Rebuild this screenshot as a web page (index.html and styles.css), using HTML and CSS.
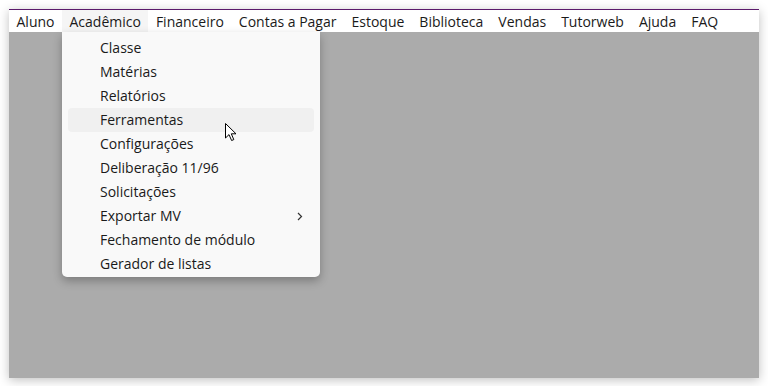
FILE: index.html
```html
<!DOCTYPE html>
<html>
<head>
  <meta charset="utf-8">
  <link rel="stylesheet" href="styles.css">
</head>
<body>
<div class="window">
  <div class="menubar">
    <span class="menu-item">Aluno</span>
    <span class="menu-item open">Acadêmico</span>
    <span class="menu-item">Financeiro</span>
    <span class="menu-item">Contas a Pagar</span>
    <span class="menu-item">Estoque</span>
    <span class="menu-item">Biblioteca</span>
    <span class="menu-item">Vendas</span>
    <span class="menu-item">Tutorweb</span>
    <span class="menu-item">Ajuda</span>
    <span class="menu-item">FAQ</span>
  </div>
  <div class="workspace">
    <div class="dropdown">
      <div class="drop-item">Classe</div>
      <div class="drop-item">Matérias</div>
      <div class="drop-item">Relatórios</div>
      <div class="drop-item hover">Ferramentas</div>
      <div class="drop-item">Configurações</div>
      <div class="drop-item">Deliberação 11/96</div>
      <div class="drop-item">Solicitações</div>
      <div class="drop-item">Exportar MV
        <svg class="chevron" width="6" height="9" viewBox="0 0 6 9"><path d="M1 1 L4.5 4.5 L1 8" fill="none" stroke="#333" stroke-width="1.2"/></svg>
      </div>
      <div class="drop-item">Fechamento de módulo</div>
      <div class="drop-item">Gerador de listas</div>
      <svg class="cursor" width="13" height="19" viewBox="0 0 13 19"><path d="M0.5 0.5 L0.5 15 L4 11.6 L6.6 17.5 L8.8 16.6 L6.3 10.8 L11 10.8 Z" fill="#fff" stroke="#000" stroke-width="1" stroke-linejoin="round"/></svg>
    </div>
  </div>
</div>
</body>
</html>
```

FILE: styles.css
```css
body, html {
  margin: 0;
  background: #ffffff;
}

body {
  padding: 9px;
  font-family: "Open Sans", "Noto Sans", sans-serif;
  font-size: 14px;
  color: #1a1a1a;
}

.window {
  width: 750px;
  height: 368px;
  display: flex;
  flex-direction: column;
  border-top: 1px solid #5b1a6b;
  box-shadow: 0 2px 10px rgba(0, 0, 0, 0.25);
}

.menubar {
  display: flex;
  height: 22px;
  background: #ffffff;
}

.menu-item {
  display: flex;
  align-items: center;
  padding: 0 7.5px;
  white-space: nowrap;
}

.menu-item.open {
  background: #f5f5f5;
}

.workspace {
  flex: 1;
  background: #ababab;
  position: relative;
}

.dropdown {
  position: absolute;
  left: 53px;
  top: 0;
  width: 258px;
  padding: 4px 0 1px;
  background: #f9f9f9;
  border-radius: 0 0 5px 5px;
  box-shadow: 0 4px 10px rgba(0, 0, 0, 0.28);
}

.drop-item {
  position: relative;
  height: 24px;
  line-height: 24px;
  margin: 0 6px;
  padding-left: 32px;
  border-radius: 4px;
}

.drop-item.hover {
  background: #f0f0f0;
}

.chevron {
  position: absolute;
  right: 11px;
  top: 8px;
}

.cursor {
  position: absolute;
  left: 163px;
  top: 91px;
}
```
